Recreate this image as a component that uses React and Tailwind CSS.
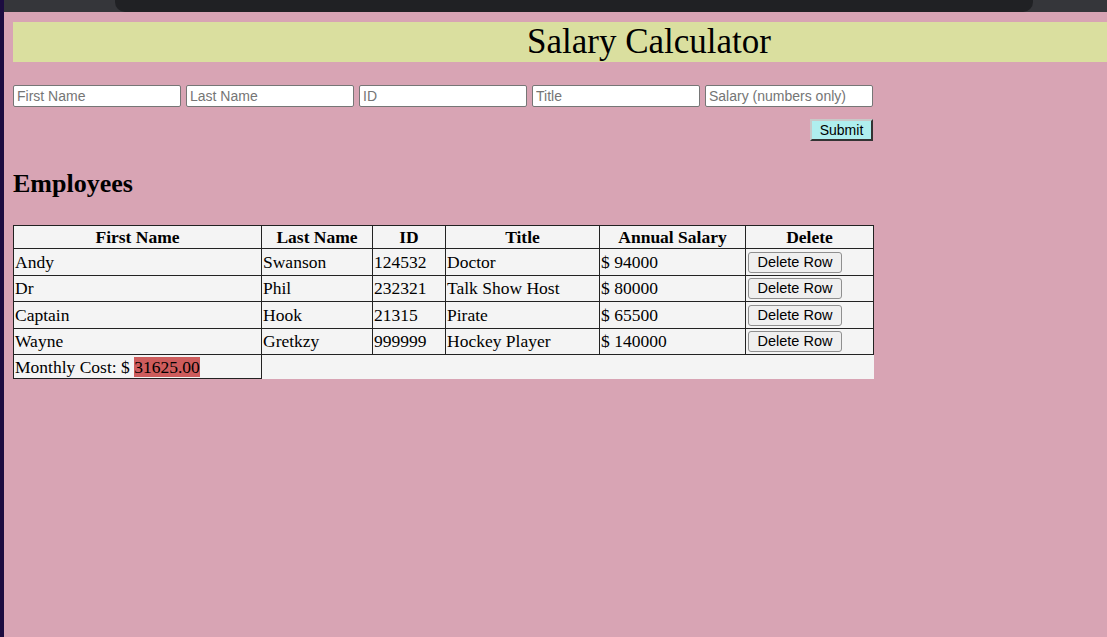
const employees = [
  { first: 'Andy', last: 'Swanson', id: '124532', title: 'Doctor', salary: 94000 },
  { first: 'Dr', last: 'Phil', id: '232321', title: 'Talk Show Host', salary: 80000 },
  { first: 'Captain', last: 'Hook', id: '21315', title: 'Pirate', salary: 65500 },
  { first: 'Wayne', last: 'Gretkzy', id: '999999', title: 'Hockey Player', salary: 140000 },
]

const fields = ['First Name', 'Last Name', 'ID', 'Title', 'Salary (numbers only)']

export default function App() {
  const monthly = (employees.reduce((s, e) => s + e.salary, 0) / 12).toFixed(2)

  const cell = 'border border-[#222] px-[1px] py-0 text-left font-normal align-middle'
  const head = 'border border-[#222] px-[1px] py-0 text-center font-bold h-[23px]'

  return (
    <div className="flex h-screen w-full overflow-hidden bg-[#d8a4b4]">
      {/* dock edge */}
      <div className="w-[4px] shrink-0 bg-[#1c0c40]" />

      <div className="flex min-w-0 flex-1 flex-col">
        {/* browser chrome sliver */}
        <div className="flex h-[12px] shrink-0 bg-[#35363a]">
          <div className="ml-[111px] w-[918px] rounded-bl-[10px] rounded-br-[10px] bg-[#202124]" />
        </div>

        <div className="flex-1 pl-[9px] pt-[10px] font-['Liberation_Serif',serif] text-black">
          <h1 className="h-[40px] bg-[#dadf9f] pl-[514px] text-[35px] leading-[40px]">
            Salary Calculator
          </h1>

          <div className="mt-[23px] flex w-[860px] gap-[5px]">
            {fields.map((f) => (
              <input
                key={f}
                placeholder={f}
                className="h-[22px] w-[168px] rounded-[2px] border border-[#767676] bg-white px-[3px] font-['Liberation_Sans',Arial,sans-serif] text-[14px] placeholder:text-[#757575] outline-none"
              />
            ))}
          </div>

          <div className="mt-[12px] flex w-[860px] justify-end">
            <button className="h-[22px] w-[63px] border-2 border-t-[#c8c8c8] border-l-[#c8c8c8] border-b-[#333] border-r-[#333] bg-[#afeeee] font-['Liberation_Sans',Arial,sans-serif] text-[14px] leading-none">
              Submit
            </button>
          </div>

          <h2 className="mt-[29px] h-[28px] text-[26px] font-bold leading-[28px]">Employees</h2>

          <table className="mt-[27px] w-[860px] table-fixed border-collapse bg-[#f4f4f4] text-[17.5px] leading-[20px]">
            <colgroup>
              <col className="w-[248px]" />
              <col className="w-[111px]" />
              <col className="w-[73px]" />
              <col className="w-[154px]" />
              <col className="w-[146px]" />
              <col className="w-[128px]" />
            </colgroup>
            <thead>
              <tr>
                <th className={head}>First Name</th>
                <th className={head}>Last Name</th>
                <th className={head}>ID</th>
                <th className={head}>Title</th>
                <th className={head}>Annual Salary</th>
                <th className={head}>Delete</th>
              </tr>
            </thead>
            <tbody>
              {employees.map((e) => (
                <tr key={e.id} className="h-[26.5px]">
                  <td className={cell}>{e.first}</td>
                  <td className={cell}>{e.last}</td>
                  <td className={cell}>{e.id}</td>
                  <td className={cell}>{e.title}</td>
                  <td className={cell}>$ {e.salary}</td>
                  <td className={cell}>
                    <button className="ml-[1px] h-[21px] w-[94px] rounded-[3px] border border-[#8f8f8f] bg-[#efefef] font-['Liberation_Sans',Arial,sans-serif] text-[14.5px] leading-none">
                      Delete Row
                    </button>
                  </td>
                </tr>
              ))}
              <tr className="h-[24px]">
                <td className={cell}>
                  Monthly Cost: $ <span className="bg-[#cd5c5c]">{monthly}</span>
                </td>
                <td />
                <td />
                <td />
                <td />
                <td />
              </tr>
            </tbody>
          </table>
        </div>
      </div>
    </div>
  )
}
